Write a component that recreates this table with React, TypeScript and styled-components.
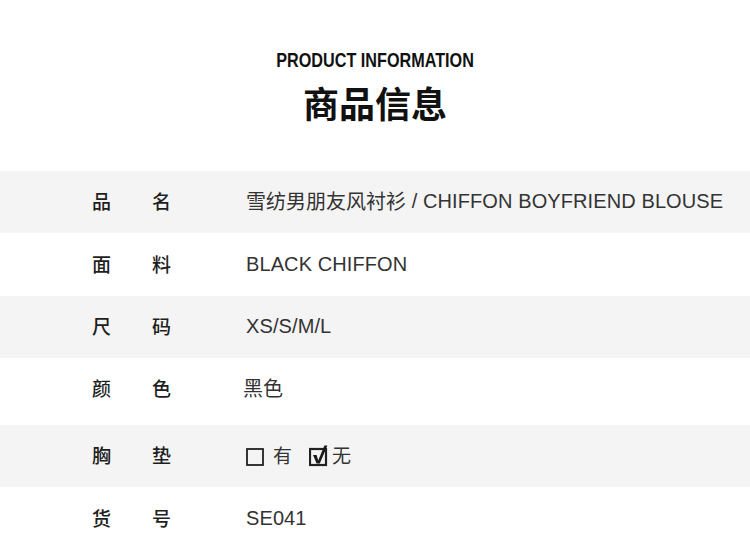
import React from "react";
import styled, { createGlobalStyle } from "styled-components";

const Global = createGlobalStyle`
  html, body { margin: 0; padding: 0; background: #ffffff; }
  body { width: 750px; font-family: "Liberation Sans", "Noto Sans CJK SC", sans-serif; }
`;

const Page = styled.div`
  width: 750px;
  display: flex;
  flex-direction: column;
`;

const Header = styled.header`
  display: flex;
  flex-direction: column;
  align-items: center;
  padding-top: 50px;
  height: 121px;
`;

const EnTitle = styled.div`
  font-family: "Liberation Sans", sans-serif;
  font-weight: 700;
  font-size: 20px;
  line-height: 20px;
  color: #111;
  transform: scaleX(0.81);
  white-space: nowrap;
`;

const CnTitle = styled.h1`
  margin: 14px 0 0;
  font-family: "Noto Sans CJK SC", sans-serif;
  font-weight: 700;
  font-size: 36px;
  line-height: 36px;
  color: #111;
`;

const Table = styled.div`
  display: flex;
  flex-direction: column;
`;

const Row = styled.div<{ $shade: boolean; $h: number; $lift?: number }>`
  display: flex;
  align-items: center;
  box-sizing: border-box;
  height: ${(p) => p.$h}px;
  padding-bottom: ${(p) => p.$lift ?? 0}px;
  background: ${(p) => (p.$shade ? "#f4f4f4" : "#ffffff")};
`;

const Label = styled.div`
  display: flex;
  width: 154px;
  padding-left: 92px;
  margin-top: -2px;
  font-family: "Noto Sans CJK SC", sans-serif;
  font-weight: 500;
  font-size: 19px;
  line-height: 20px;
  color: #1e1e1e;
`;

const LabelChar = styled.span`
  width: 60px;
`;

const Value = styled.div<{ $shift?: number }>`
  display: flex;
  align-items: center;
  margin-left: ${(p) => p.$shift ?? 0}px;
  margin-top: -2px;
  font-family: "Liberation Sans", "Noto Sans CJK SC", sans-serif;
  font-size: 20px;
  letter-spacing: 0.1px;
  line-height: 22px;
  color: #333;
  white-space: nowrap;
`;

const Cn = styled.span`
  font-family: "Noto Sans CJK SC", sans-serif;
  font-size: 20px;
  letter-spacing: 0;
`;

const Option = styled.span`
  display: flex;
  align-items: center;
  gap: 8px;
  margin-right: 17px;
  font-family: "Noto Sans CJK SC", sans-serif;
  font-size: 19px;
  &:last-child { margin-right: 0; gap: 4px; }
`;

const Box = ({ checked }: { checked?: boolean }) => (
  <svg width="19" height="24" viewBox="0 0 19 24" style={{ display: "block" }}>
    <rect x="1" y="6" width="16" height="16" fill="none" stroke="#222" strokeWidth={checked ? 2.2 : 1.8} />
    {checked && (
      <path d="M4 12 L7.6 12 L9.2 17.5 L15.4 2.5 L18.4 2.5 L10.8 20.5 L7.6 20.5 Z" fill="#1a1a1a" />
    )}
  </svg>
);

const rows: { a: string; b: string; h: number; v: React.ReactNode; shift?: number; lift?: number }[] = [
  { a: "品", b: "名", h: 62, v: <><Cn>雪纺男朋友风衬衫</Cn>&nbsp;/ CHIFFON BOYFRIEND BLOUSE</> },
  { a: "面", b: "料", h: 63, v: "BLACK CHIFFON" },
  { a: "尺", b: "码", h: 62, v: "XS/S/M/L" },
  { a: "颜", b: "色", h: 67, v: <Cn>黑色</Cn>, shift: -3, lift: 5 },
  {
    a: "胸", b: "垫", h: 62,
    v: (
      <>
        <Option><Box />有</Option>
        <Option><Box checked />无</Option>
      </>
    ),
  },
  { a: "货", b: "号", h: 63, v: "SE041" },
];

export default function App() {
  return (
    <Page>
      <Global />
      <Header>
        <EnTitle>PRODUCT INFORMATION</EnTitle>
        <CnTitle>商品信息</CnTitle>
      </Header>
      <Table>
        {rows.map((r, i) => (
          <Row key={i} $shade={i % 2 === 0} $h={r.h} $lift={r.lift}>
            <Label>
              <LabelChar>{r.a}</LabelChar>
              <LabelChar>{r.b}</LabelChar>
            </Label>
            <Value $shift={r.shift}>{r.v}</Value>
          </Row>
        ))}
      </Table>
    </Page>
  );
}
